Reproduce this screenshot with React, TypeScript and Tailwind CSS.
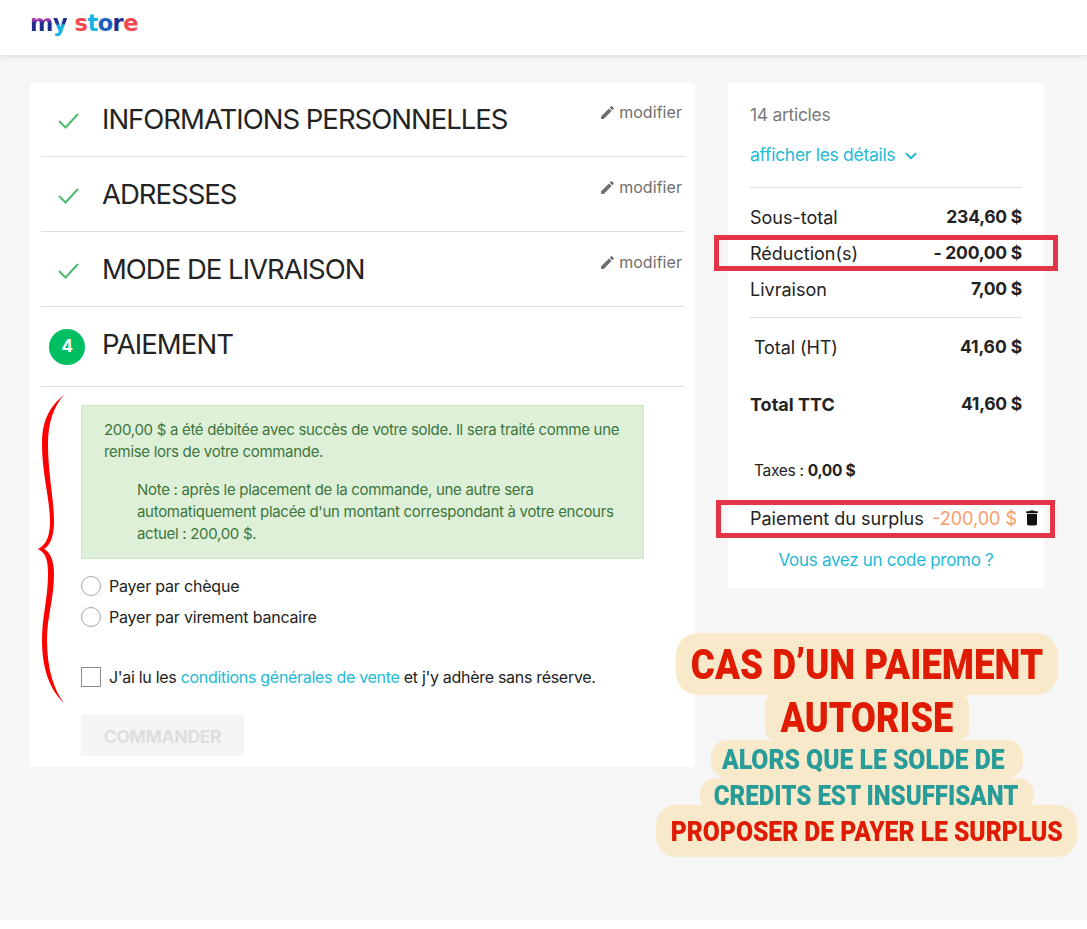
import { ChevronDown } from "lucide-react";
import { MdDelete, MdEdit } from "react-icons/md";

const steps = ["INFORMATIONS PERSONNELLES", "ADRESSES", "MODE DE LIVRAISON"];

function DoneStep({ title, first }: { title: string; first: boolean }) {
  return (
    <div className={first ? "relative flex h-[74px] items-center border-b border-[#dedede]" : "relative flex h-[75px] items-center border-b border-[#dedede]"}>
      <svg className="ml-[17px] mt-[3px]" width="21" height="16" viewBox="0 0 21 16" fill="none">
        <path d="M1 8 L7.5 14.5 L20 1" stroke="#4cbb6c" strokeWidth="2" />
      </svg>
      <h2 className="ml-[23px] mt-[1px] text-[27.5px] font-normal tracking-[-1px] text-[#232323]">{title}</h2>
      <div className={first ? "absolute right-[2px] top-[17px] flex items-center gap-[3px] text-[16px] tracking-[0.05px] text-[#6f6f6f]" : "absolute right-[2px] top-[18px] flex items-center gap-[3px] text-[16px] tracking-[0.05px] text-[#6f6f6f]"}>
        <MdEdit className="h-[17px] w-[17px]" />
        <span>modifier</span>
      </div>
    </div>
  );
}

function Row({ label, value, bold }: { label: string; value: string; bold?: boolean }) {
  return (
    <div className="flex h-[36px] items-center justify-between text-[18px] tracking-[0px] text-[#232323]">
      <span className={bold ? "font-bold" : ""}>{label}</span>
      <span className="text-[17.5px] font-bold tracking-[-0.25px]">{value}</span>
    </div>
  );
}

export default function App() {
  return (
    <div className="relative flex min-h-[929px] flex-col bg-[#f6f6f6] font-['Inter',sans-serif] tracking-[-0.3px]">
      <header className="h-[55px] bg-white pl-[30px] pt-[4px] shadow-[0_1px_6px_rgba(0,0,0,0.12)]">
        <div className="font-['DejaVu_Sans',sans-serif] text-[22.5px] font-bold leading-[38px] tracking-[-0.5px]">
          <span className="bg-[linear-gradient(#c23fb5_35%,#1d2f8f_50%)] bg-clip-text text-transparent">m</span>
          <span className="bg-[linear-gradient(#1d2f8f_50%,#18b4e4_60%)] bg-clip-text text-transparent">y</span>
          <span> </span>
          <span className="text-[#f5474f]">s</span>
          <span className="text-[#18b4e4]">t</span>
          <span className="text-[#1d5fc0]">o</span>
          <span className="text-[#1d2f8f]">r</span>
          <span className="text-[#f5474f]">e</span>
        </div>
      </header>

      <main className="flex flex-1 items-start gap-[33px] pl-[30px] pt-[28px]">
        <section className="h-[684px] w-[665px] bg-white px-[11px]">
          {steps.map((s, i) => (
            <DoneStep key={s} title={s} first={i === 0} />
          ))}
          <div className="flex h-[80px] items-center border-b border-[#dedede] pb-[4px]">
            <span className="ml-[8px] mt-[4px] flex h-[36px] w-[36px] items-center justify-center rounded-full bg-[#00bf63] text-[17px] font-bold text-white">4</span>
            <h2 className="ml-[17px] text-[27.5px] font-normal tracking-[-0.9px] text-[#232323]">PAIEMENT</h2>
          </div>

          <div className="w-[563px] pl-[40px] pt-[18px]">
            <div className="h-[154px] w-[563px] border border-[#cfe6c8] bg-[#dff0d8] pl-[22px] pr-[16px] pt-[13px] text-[15px] leading-[22px] text-[#3c763d]">
              <p>200,00 $ a été débitée avec succès de votre solde. Il sera traité comme une remise lors de votre commande.</p>
              <p className="mt-[16px] pl-[33px]">Note : après le placement de la commande, une autre sera automatiquement placée d'un montant correspondant à votre encours actuel : 200,00 $.</p>
            </div>
            <div className="mt-[11px] flex h-[31px] items-center gap-[8px] text-[16px] tracking-[-0.2px] text-[#232323]">
              <span className="h-[20px] w-[20px] rounded-full border border-[#a5a5a5]" />
              Payer par chèque
            </div>
            <div className="flex h-[31px] items-center gap-[8px] text-[16px] tracking-[-0.2px] text-[#232323]">
              <span className="h-[20px] w-[20px] rounded-full border border-[#a5a5a5]" />
              Payer par virement bancaire
            </div>
            <div className="mt-[29px] flex h-[31px] w-[600px] items-center gap-[8px] text-[16px] tracking-[-0.3px] text-[#232323]">
              <span className="h-[20px] w-[20px] border border-[#8d8d8d]" />
              <span>
                J'ai lu les <span className="text-[#24b9d7]">conditions générales de vente</span> et j'y adhère sans réserve.
              </span>
            </div>
            <button className="mt-[23px] flex h-[41px] w-[163px] items-center justify-center bg-[#f5f5f5] pt-[3px] text-[17.5px] font-bold text-[#dedede]">COMMANDER</button>
          </div>
        </section>

        <aside className="h-[505px] w-[316px] bg-white px-[22px] pt-[19px]">
          <div className="text-[17.5px] text-[#7a7a7a]">14 articles</div>
          <div className="mt-[14px] flex items-center gap-[7px] text-[17.5px] text-[#24b9d7]">
            afficher les détails
            <ChevronDown className="mt-[2px] h-[18px] w-[18px]" strokeWidth={2.6} />
          </div>
          <div className="mt-[18px] border-t border-[#dedede]" />
          <div className="mt-[12px]">
            <Row label="Sous-total" value="234,60 $" />
            <Row label="Réduction(s)" value="- 200,00 $" />
            <Row label="Livraison" value="7,00 $" />
          </div>
          <div className="mt-[9px] border-t border-[#dedede]" />
          <div className="mt-[12px] flex h-[36px] items-center justify-between pl-[4px] text-[18px] tracking-[-0.1px] text-[#232323]">
            <span>Total (HT)</span>
            <span className="text-[17.5px] font-bold">41,60 $</span>
          </div>
          <div className="mt-[21px]">
            <Row label="Total TTC" value="41,60 $" bold />
          </div>
          <div className="mt-[36px] pl-[4px] text-[15.5px] text-[#232323]">
            Taxes : <span className="font-bold">0,00 $</span>
          </div>
          <div className="mt-[23px] flex items-center justify-between text-[18px] tracking-[0px] text-[#232323]">
            <span className="whitespace-nowrap">Paiement du surplus</span>
            <span className="-mr-[20px] flex items-center gap-[5px] whitespace-nowrap text-[#f99b6b]">
              -200,00 $
              <MdDelete className="h-[20px] w-[20px] text-[#111]" />
            </span>
          </div>
          <div className="mt-[16px] text-center text-[17px] text-[#24b9d7]">Vous avez un code promo ?</div>
        </aside>
      </main>

      <footer className="h-[9px] bg-white" />

      {/* annotations par-dessus la page */}
      <div className="absolute left-[714px] top-[235px] h-[36px] w-[344px] border-[5px] border-[#e43546]" />
      <div className="absolute left-[716px] top-[500px] h-[38px] w-[339px] border-[5px] border-[#e43546]" />

      <svg className="absolute left-[36px] top-[394px]" width="32" height="312" viewBox="0 0 32 312">
        <path
          d="M28 1 C14 12 6 26 6 50 C6 80 14 105 14 128 C14 142 10 151 2 155 C10 159 12 166 12 180 C12 205 6 222 6 246 C6 275 14 296 28 309 C18 296 11 275 11 246 C11 222 18 205 18 180 C18 166 14 158 8 155 C14 152 18 142 18 128 C18 105 12 80 12 50 C12 28 18 12 28 1 Z"
          fill="#ff0000"
        />
      </svg>

      <div className="absolute left-[656px] top-[633px] flex w-[421px] flex-col items-center whitespace-nowrap font-['Roboto',sans-serif] font-black tracking-[0px]">
        <div className="flex h-[62px] w-[382px] items-center justify-center rounded-[22px] bg-[#f8e9ca] text-[43px] text-[#e01b04]">
          <span className="inline-block scale-x-[0.855]">CAS D’UN PAIEMENT</span>
        </div>
        <div className="-mt-[1px] flex h-[46px] w-[204px] items-center justify-center rounded-[10px] bg-[#f8e9ca] text-[43px] text-[#e01b04]">
          <span className="inline-block scale-x-[0.84]">AUTORISE</span>
        </div>
        <div className="flex h-[38px] w-[312px] items-center justify-center rounded-[16px] bg-[#f8e9ca] pr-[6px] pt-[2px] text-[28px] text-[#279c98]">
          <span className="inline-block scale-x-[0.882]">ALORS QUE LE SOLDE DE</span>
        </div>
        <div className="flex h-[34px] w-[334px] items-center justify-center rounded-[16px] bg-[#f8e9ca] pt-[2px] text-[28px] text-[#279c98]">
          <span className="inline-block scale-x-[0.86]">CREDITS EST INSUFFISANT</span>
        </div>
        <div className="-mt-[7px] flex h-[52px] w-[421px] items-center justify-center rounded-[20px] bg-[#f8e9ca] pt-[2px] text-[27px] text-[#e01b04]">
          <span className="inline-block scale-x-[0.913]">PROPOSER DE PAYER LE SURPLUS</span>
        </div>
      </div>
    </div>
  );
}
